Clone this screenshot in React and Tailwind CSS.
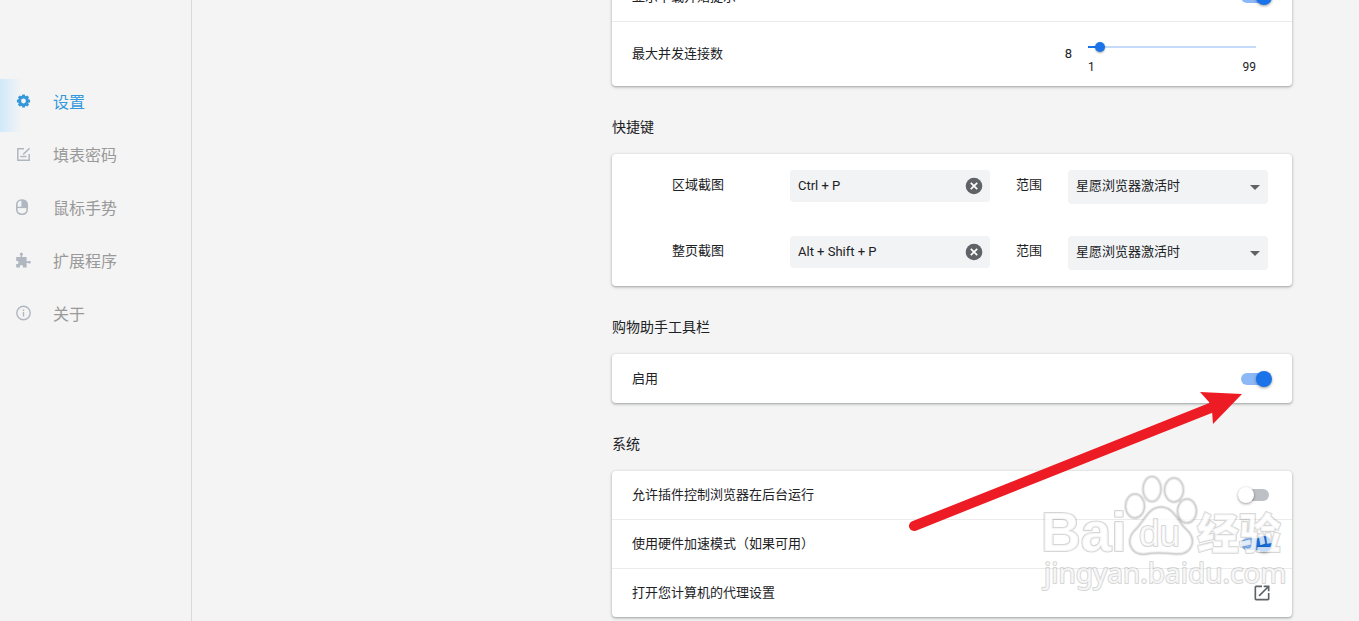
import { useState } from "react";

const gearTeeth = [0, 45, 90, 135, 180, 225, 270, 315];

function NavIcon({ children }) {
  return (
    <svg viewBox="0 0 16 16" className="-mt-0.5 size-4 overflow-visible" aria-hidden="true">
      {children}
    </svg>
  );
}

function GearIcon() {
  return (
    <NavIcon>
      <circle cx="7.5" cy="7" r="3.9" fill="none" stroke="currentColor" strokeWidth="3" />
      {gearTeeth.map((angle) => (
        <rect key={angle} x="6" y="0.4" width="3" height="3" rx="0.6" fill="currentColor" transform={`rotate(${angle} 7.5 7)`} />
      ))}
    </NavIcon>
  );
}

function FormIcon() {
  return (
    <NavIcon>
      <g fill="none" stroke="currentColor" strokeWidth="1.5">
        <path d="M8 1.800H1.800v11.400h11.400V7" />
        <path d="M7.200 7.400 13.600 1.200M4.200 9.600h6.200" />
      </g>
    </NavIcon>
  );
}

function MouseIcon() {
  return (
    <NavIcon>
      <rect x="0.8" y="0" width="10.400" height="14.200" rx="4.600" fill="none" stroke="currentColor" strokeWidth="1.600" />
      <path d="M1 7.400h10" fill="none" stroke="currentColor" strokeWidth="1.400" />
      <path d="M5.400 0h1.600a4.200 4.200 0 0 1 4.200 4.400V7.400H5.400z" fill="currentColor" />
    </NavIcon>
  );
}

function PuzzleIcon() {
  return (
    <NavIcon>
      <path
        fill="currentColor"
        d="M0.200 4H4.600V2.400A1.500 1.500 0 1 1 6.200 2.400V4H10.600V8.300H12.300A1.400 1.400 0 1 1 12.300 10.100H10.600V14.600H6.900V13A1.600 1.600 0 0 0 3.900 13V14.600H0.200V10.900H1.500A1.600 1.600 0 0 0 1.500 7.900H0.200z"
      />
    </NavIcon>
  );
}

function InfoIcon() {
  return (
    <NavIcon>
      <g fill="none" stroke="currentColor" strokeWidth="1.400">
        <circle cx="7.500" cy="7" r="6.700" />
        <path d="M7.500 6v4.600M7.500 3.400v1.500" />
      </g>
    </NavIcon>
  );
}

const navItems = [
  { label: "设置", Icon: GearIcon, active: true },
  { label: "填表密码", Icon: FormIcon },
  { label: "鼠标手势", Icon: MouseIcon },
  { label: "扩展程序", Icon: PuzzleIcon },
  { label: "关于", Icon: InfoIcon },
];

function Sidebar() {
  return (
    <nav className="w-48 shrink-0 border-r border-[#d9d9d9] pt-[79px] text-base">
      {navItems.map(({ label, Icon, active }) => (
        <a
          key={label}
          href="#"
          aria-current={active ? "page" : undefined}
          className={
            active
              ? "flex h-[53px] items-center bg-linear-to-r from-[#d0e9fa] to-transparent to-[22px] pb-1.5 pl-4 text-[#3498db]"
              : "flex h-[53px] items-center pb-1.5 pl-4 text-[#b0b7c1]"
          }
        >
          <Icon />
          <span className={active ? "ml-[21px]" : "ml-[21px] text-[#999]"}>{label}</span>
        </a>
      ))}
    </nav>
  );
}

function Section({ title, children }) {
  return (
    <section>
      {title && <h2 className="mt-[31px] mb-[17px] text-sm leading-5">{title}</h2>}
      <div className="divide-y divide-[#ebebeb] rounded bg-white shadow-[0_1px_2px_0_rgba(60,64,67,0.3),0_1px_3px_1px_rgba(60,64,67,0.15)]">
        {children}
      </div>
    </section>
  );
}

function ToggleRow({ label, defaultChecked }) {
  return (
    <label className="box-content flex min-h-12 flex-1 items-center justify-between px-5">
      <span>{label}</span>
      <input
        type="checkbox"
        role="switch"
        defaultChecked={defaultChecked}
        className="relative mr-[3px] h-3 w-7 appearance-none rounded-full bg-[#bdc1c6] before:absolute before:-top-0.5 before:-left-[3px] before:size-4 before:rounded-full before:bg-white before:shadow-[0_1px_3px_rgba(0,0,0,0.4)] checked:bg-[#8cb8f6] checked:before:left-[15px] checked:before:bg-[#1a73e8]"
      />
    </label>
  );
}

function ConnectionsRow() {
  const [value, setValue] = useState(8);
  const ratio = (value - 1) / 98;
  const stop = `calc(5px + (100% - 10px) * ${ratio})`;
  return (
    <div className="flex h-16 items-center justify-between pr-9 pl-5">
      <label htmlFor="connections">最大并发连接数</label>
      <div className="flex items-center">
        <output htmlFor="connections" className="mr-4">{value}</output>
        <div className="w-42 pt-1.5">
          <div className="-mx-[5px] flex">
            <input
              id="connections"
              type="range"
              min="1"
              max="99"
              value={value}
              onChange={(e) => setValue(Number(e.target.value))}
              className="h-5 w-full appearance-none bg-[length:100%_2px] bg-center bg-no-repeat [&::-webkit-slider-thumb]:size-2.5 [&::-webkit-slider-thumb]:appearance-none [&::-webkit-slider-thumb]:rounded-full [&::-webkit-slider-thumb]:bg-[#1a73e8] [&::-webkit-slider-thumb]:shadow-[0_1px_2px_rgba(0,0,0,0.35)]"
              style={{
                backgroundImage: `linear-gradient(to right, transparent 5px, #1a73e8 5px, #1a73e8 ${stop}, #c6dafc ${stop}, #c6dafc calc(100% - 5px), transparent calc(100% - 5px))`,
              }}
            />
          </div>
          <div className="flex justify-between text-xs leading-5">
            <span>1</span>
            <span>99</span>
          </div>
        </div>
      </div>
    </div>
  );
}

function ShortcutRow({ id, label, keys }) {
  const [value, setValue] = useState(keys);
  return (
    <div className="flex h-[66px] items-start pt-4 pr-6 pl-[60px]">
      <label htmlFor={id} className="flex-1 leading-[30px]">{label}</label>
      <div className="relative w-[200px]">
        <input
          id={id}
          type="text"
          value={value}
          onChange={(e) => setValue(e.target.value)}
          className="h-8 w-full rounded bg-[#f1f3f4] pr-8 pb-0.5 pl-2"
        />
        <button type="button" aria-label="清除" onClick={() => setValue("")} className="absolute top-2 right-2 text-[#5f6368]">
          <svg viewBox="0 0 16 16" className="size-4 overflow-visible" aria-hidden="true">
            <circle cx="8" cy="8" r="8.3" fill="currentColor" />
            <path d="m4.800 4.800 6.400 6.400m0-6.400-6.400 6.400" stroke="#fff" strokeWidth="1.700" />
          </svg>
        </button>
      </div>
      <label htmlFor={id + "-scope"} className="mx-[26px] leading-[30px]">范围</label>
      <div className="relative w-[200px]">
        <select id={id + "-scope"} className="h-[34px] w-full appearance-none rounded bg-[#f1f3f4] pr-8 pb-0.5 pl-2">
          <option>星愿浏览器激活时</option>
        </select>
        <svg viewBox="0 0 10 5" className="pointer-events-none absolute top-[15px] right-2 h-[5px] w-2.5" fill="#5f6368" aria-hidden="true">
          <path d="M0 0h10L5 5z" />
        </svg>
      </div>
    </div>
  );
}

function LinkRow({ label }) {
  return (
    <a href="#" className="flex h-12 items-center justify-between px-5 box-content">
      <span>{label}</span>
      <svg viewBox="0 0 24 24" className="size-5 text-[#5f6368]" fill="currentColor" aria-hidden="true">
        <path d="M19 19H5V5h7V3H5a2 2 0 0 0-2 2v14a2 2 0 0 0 2 2h14c1.100 0 2-.9 2-2v-7h-2v7zM14 3v2h3.590l-9.830 9.830 1.410 1.410L19 6.410V10h2V3h-7z" />
      </svg>
    </a>
  );
}

function PointerArrow() {
  return (
    <svg viewBox="0 0 340 145" className="pointer-events-none absolute right-[47px] bottom-[83px] h-[145px] w-[340px]" aria-hidden="true">
      <path d="M9 137 308 18" stroke="#ed1c24" strokeWidth="10" strokeLinecap="round" />
      <path d="m337 5-42-2 9 10 3 9 1 13z" fill="#ed1c24" />
    </svg>
  );
}

function WatermarkShapes() {
  return (
    <>
      <ellipse cx="95" cy="39" rx="9.500" ry="12" />
      <ellipse cx="112" cy="22" rx="9" ry="12.500" />
      <ellipse cx="134" cy="23" rx="9.500" ry="12" />
      <ellipse cx="147" cy="44" rx="9.500" ry="12" />
      <path d="M121 40c13 0 17 15 25 22 12 11 6 26-10 25-10-1-20-2-30 0-16 2-21-14-11-24 9-8 13-23 26-23z" />
    </>
  );
}

function Watermark() {
  return (
    <svg
      viewBox="0 0 252 130"
      className="pointer-events-none absolute right-0 bottom-[20px] h-[130px] w-[252px]"
      strokeLinejoin="round"
      aria-hidden="true"
    >
      <g fill="#fff" fillOpacity="0.75" stroke="#000" strokeWidth="3.600" strokeOpacity="0.07">
        <WatermarkShapes />
      </g>
      <g fill="none" stroke="#000" strokeWidth="1.400" strokeOpacity="0.12">
        <WatermarkShapes />
      </g>
      <g fill="#fff" fillOpacity="0.75" stroke="#000" strokeWidth="2.200" strokeOpacity="0.16" paintOrder="stroke">
        <text x="1" y="84" fontSize="55" fontWeight="700" fontFamily="Liberation Sans, sans-serif">Bai</text>
        <text x="99" y="79" fontSize="37" fontFamily="Liberation Sans, sans-serif">du</text>
        <text x="157" y="82" fontSize="42" fontWeight="900" fontFamily="Noto Sans CJK SC, sans-serif">经验</text>
        <text x="4" y="116" fontSize="28" fontFamily="Noto Sans, sans-serif">jingyan.baidu.com</text>
      </g>
    </svg>
  );
}

export default function App() {
  return (
    <div className="flex h-screen overflow-hidden bg-[#f4f4f4] font-[Roboto,'Noto_Sans_CJK_SC',sans-serif] text-[13px] leading-5 text-[#202124]">
      <Sidebar />
      <main className="relative mr-[67px] -mt-[27px] ml-auto w-full max-w-[680px] self-start">
        <Section>
          <ToggleRow label="显示下载开始提示" defaultChecked />
          <ConnectionsRow />
        </Section>
        <Section title="快捷键">
          <div>
            <ShortcutRow id="area" label="区域截图" keys="Ctrl + P" />
            <ShortcutRow id="page" label="整页截图" keys="Alt + Shift + P" />
          </div>
        </Section>
        <Section title="购物助手工具栏">
          <div className="flex min-h-[49px]">
            <ToggleRow label="启用" defaultChecked />
          </div>
        </Section>
        <Section title="系统">
          <ToggleRow label="允许插件控制浏览器在后台运行" />
          <ToggleRow label="使用硬件加速模式（如果可用）" defaultChecked />
          <LinkRow label="打开您计算机的代理设置" />
        </Section>
        <PointerArrow />
        <Watermark />
      </main>
    </div>
  );
}
